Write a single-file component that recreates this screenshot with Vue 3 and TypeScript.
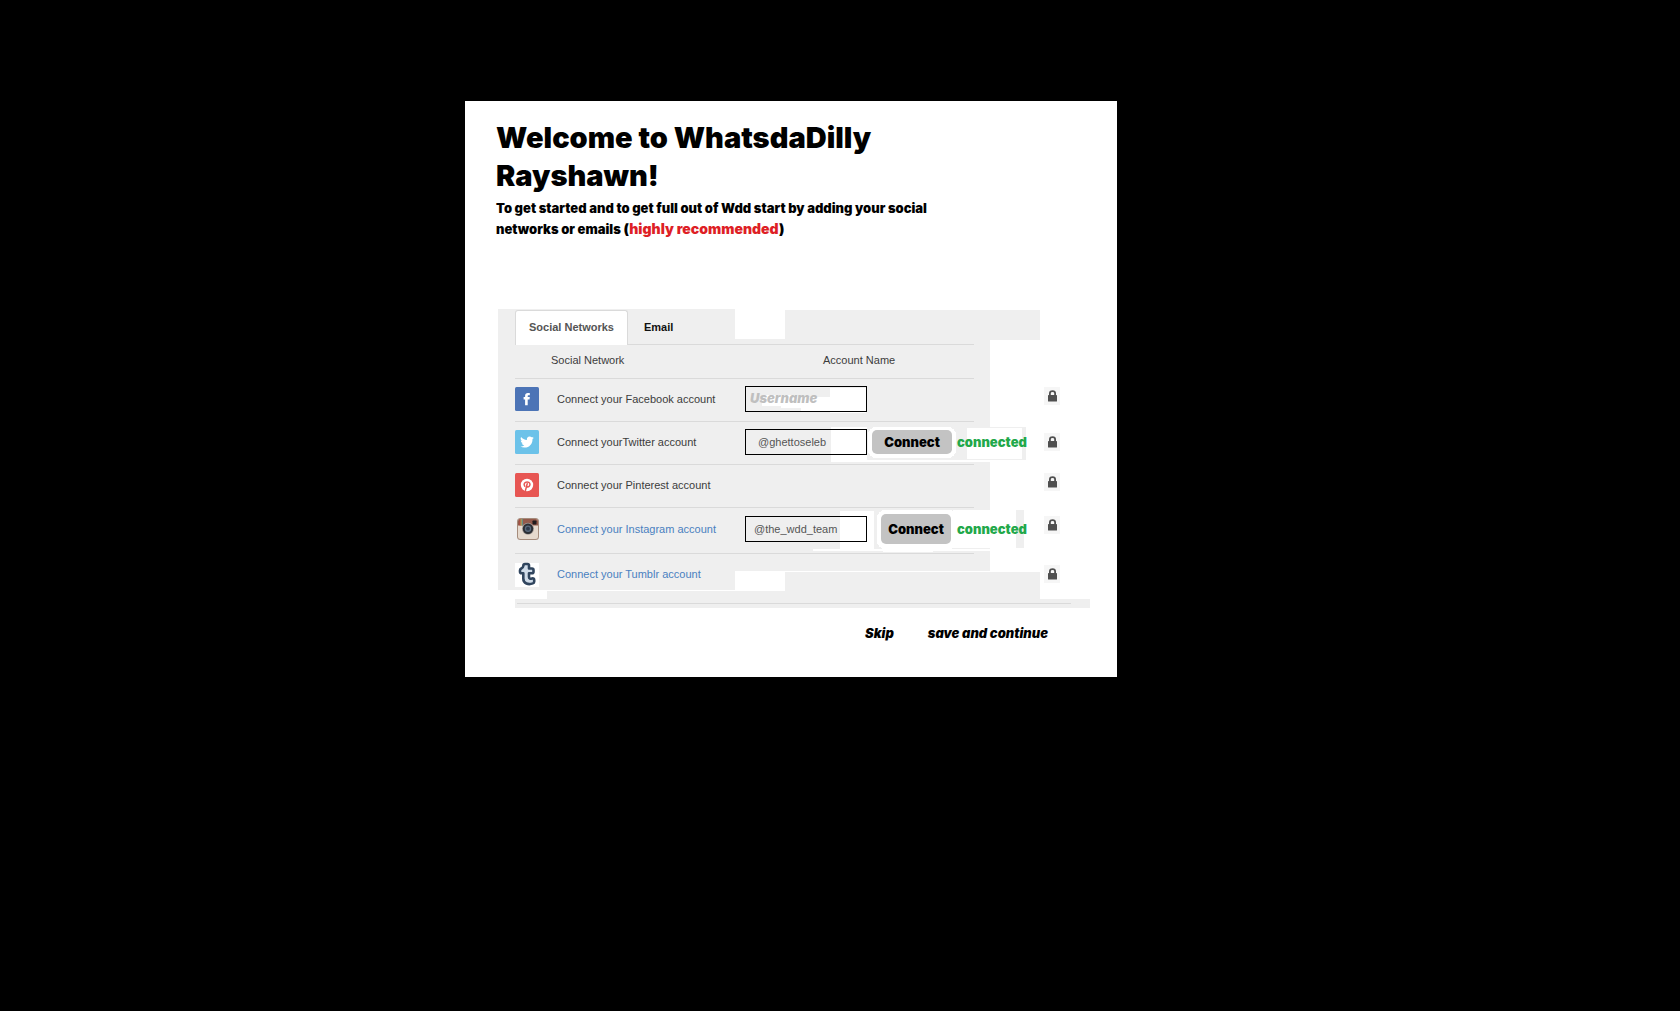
<script setup lang="ts">
import { ref } from 'vue'

type Network = 'facebook' | 'twitter' | 'pinterest' | 'instagram' | 'tumblr'

interface Account {
  id: Network
  label: string
  linked?: boolean
  editable?: boolean
  name: string
  connected?: boolean
}

const tab = ref<'social' | 'email'>('social')

const accounts = ref<Account[]>([
  { id: 'facebook', label: 'Connect your Facebook account', editable: true, name: '' },
  { id: 'twitter', label: 'Connect yourTwitter account', editable: true, name: '@ghettoseleb', connected: true },
  { id: 'pinterest', label: 'Connect your Pinterest account', name: '' },
  { id: 'instagram', label: 'Connect your Instagram account', linked: true, editable: true, name: '@the_wdd_team', connected: true },
  { id: 'tumblr', label: 'Connect your Tumblr account', linked: true, name: '' },
])
</script>

<template>
  <div class="page">
    <main class="card">
      <header class="intro">
        <h1>Welcome to WhatsdaDilly Rayshawn!</h1>
        <p>
          To get started and to get full out of Wdd start by adding your social<br />
          networks or emails
          <span class="note">(<em>highly recommended</em>)</span>
        </p>
      </header>

      <section class="panel">
        <svg class="backdrop" width="592" height="299" viewBox="0 0 592 299" shape-rendering="crispEdges" aria-hidden="true">
          <g fill="#efefef">
            <path d="M0 0H237V30H287V1H542V31H492V262H237V281H0Z" />
            <path d="M49 282H237V282H287V263H542V290H592V299H17V290H49Z" />
          </g>
          <g fill="#dadada">
            <path d="M17 35H476V36H17ZM17 69H476V70H17ZM17 112H476V113H17ZM17 155H476V156H17ZM17 198H476V199H17ZM17 244H476V245H17ZM19 294H573V295H19Z" />
          </g>
          <g fill="#fff">
            <path d="M332 79H368V104H332V102H303V99H283V97H264V86H300V88H332Z" />
            <path d="M333 118H369V152H333Z" />
            <path d="M333 151H492V153H333Z" />
            <path d="M342 202H376V240H342Z" />
            <path d="M315 240H492V242H435V243H385V242H315Z" />
          </g>
          <path fill="#efefef" d="M369 118H528V151H369Z" />
          <path fill="#fff" d="M469 119H524V150H469Z" />
          <rect x="370" y="118" width="88" height="31" rx="8" fill="#fff" />
          <path fill="#efefef" d="M376 201H526V239H376Z" />
          <path fill="#fff" d="M455 201H518V239H455Z" />
          <rect x="379" y="201" width="80" height="39" rx="8" fill="#fff" />
          <rect x="17" y="254" width="24" height="24" fill="#fff" />
        </svg>

        <div class="content">
          <nav class="tabs">
            <button type="button" :class="{ active: tab === 'social' }" @click="tab = 'social'">Social Networks</button>
            <button type="button" :class="{ active: tab === 'email' }" @click="tab = 'email'">Email</button>
          </nav>

          <table>
            <colgroup>
              <col class="c-icon" /><col class="c-label" /><col class="c-account" />
              <col class="c-action" /><col class="c-status" /><col class="c-lock" />
            </colgroup>
            <thead>
              <tr>
                <th colspan="2" class="h-network">Social Network</th>
                <th colspan="2" class="h-account">Account Name</th>
                <td></td>
                <td></td>
              </tr>
            </thead>
            <tbody>
              <tr v-for="a in accounts" :key="a.id" :class="a.id">
                <td>
                  <svg v-if="a.id === 'facebook'" class="icon" viewBox="0 0 24 24">
                    <rect width="24" height="24" rx="1.5" fill="#4c74b6" />
                    <path fill="#fff" d="M10.1 18.2V12.4H8.6V10h1.5V8.600C10.100 6.800 11.100 5.900 12.800 5.900H14.800V8.200H13.600C12.900 8.200 12.700 8.500 12.700 9.100V10H14.800L14.500 12.400H12.700V18.200Z" />
                  </svg>
                  <svg v-else-if="a.id === 'twitter'" class="icon" viewBox="0 0 24 24">
                    <rect width="24" height="24" rx="1.5" fill="#6cc2e9" />
                    <path fill="#fff" transform="translate(5.200 5.200) scale(.57)" d="M23.950 4.570a10 10 0 0 1-2.820.770 4.950 4.950 0 0 0 2.160-2.720c-.950.550-2 .950-3.130 1.180a4.920 4.920 0 0 0-8.380 4.480C7.690 8.100 4.070 6.130 1.640 3.160a4.900 4.900 0 0 0 1.520 6.570 4.900 4.900 0 0 1-2.230-.610v.060a4.920 4.920 0 0 0 3.950 4.830 5 5 0 0 1-2.210.080 4.940 4.940 0 0 0 4.600 3.420A9.870 9.870 0 0 1 0 19.540a13.990 13.990 0 0 0 7.550 2.210c9.050 0 14-7.500 14-13.980 0-.210 0-.420-.020-.630a9.940 9.940 0 0 0 2.420-2.570z" />
                  </svg>
                  <svg v-else-if="a.id === 'pinterest'" class="icon" viewBox="0 0 24 24">
                    <rect width="24" height="24" rx="1.5" fill="#e75653" />
                    <circle cx="12" cy="12" r="6.200" fill="#fff" />
                    <path fill="none" stroke="#e75653" stroke-width="1.500" stroke-linecap="round" d="M9.700 13.100C8.400 11.200 9.400 8.900 12.100 8.900C14.900 8.900 15.500 11.200 14.500 12.900C13.700 14.300 12 14.100 11.700 13M12.200 10.800L10.500 17.400" />
                  </svg>
                  <svg v-else-if="a.id === 'instagram'" class="icon" viewBox="0 0 24 24">
                    <rect x="2" y="1" width="22" height="22" rx="3.500" fill="#a58c7c" />
                    <rect x="3" y="2" width="20" height="20" rx="2.500" fill="#e6dace" />
                    <path fill="#935a4b" d="M3 8.500V4.500A2.500 2.500 0 0 1 5.500 2H20.500A2.500 2.500 0 0 1 23 4.500V8.500Z" />
                    <path fill="#b8473c" d="M4.500 2.300H5.600V8.500H4.500Z" />
                    <path fill="#b9ad59" d="M5.600 2.100H6.800V8.500H5.600Z" />
                    <path fill="#668b82" d="M6.800 2H8V8.500H6.800Z" />
                    <rect x="17.500" y="3.500" width="4" height="4" rx=".7" fill="#201b1d" />
                    <circle cx="13" cy="11.700" r="6" fill="#a39a94" />
                    <circle cx="13" cy="11.700" r="5.200" fill="#2b2e34" />
                    <circle cx="13" cy="11.700" r="3.200" fill="#5b6b7d" />
                    <circle cx="13" cy="11.700" r="1.900" fill="#303b4b" />
                  </svg>
                  <svg v-else class="icon" viewBox="0 0 24 24">
                    <path fill="#cfdbe8" stroke="#30455e" stroke-width="2.600" stroke-linejoin="round" d="M8.300 4C8.300 2.600 9 2 10 2H12.500C13.400 2 14 2.600 14 3.500V6.500H17C18 6.500 18.500 7 18.500 8V9.700C18.500 10.700 18 11.200 17 11.200H14V15C14 16.800 15.300 16.900 17 16.500C18.500 16.200 19.200 16.700 19.200 18V19.500C19.200 20.500 18.800 21 17.800 21.400C13.500 23 8.300 21.700 8.300 16.500V11.200H6.500C5.500 11.200 5 10.700 5 9.700V8.200C5 7.200 5.500 6.900 6.300 6.500C7.500 6 8.200 5.300 8.300 4Z" />
                  </svg>
                </td>
                <td>
                  <a v-if="a.linked" href="#" class="label linked">{{ a.label }}</a>
                  <label v-else :for="a.editable ? a.id : undefined" class="label">{{ a.label }}</label>
                </td>
                <td>
                  <input v-if="a.editable" :id="a.id" v-model="a.name" type="text" placeholder="Username" :aria-label="a.label" />
                </td>
                <td class="action">
                  <button v-if="a.connected" type="button" class="connect">Connect</button>
                </td>
                <td><span v-if="a.connected" class="status">connected</span></td>
                <td class="privacy">
                  <svg class="lock" width="16" height="18" viewBox="0 0 16 18" aria-label="Private">
                    <rect width="16" height="18" fill="#f6f6f6" />
                    <path fill="none" stroke="#4f4f4f" stroke-width="1.800" d="M5.900 9V6.200C5.900 3.300 11.100 3.300 11.100 6.200V9" />
                    <rect x="4" y="8" width="9" height="6.500" rx=".6" fill="#4f4f4f" />
                  </svg>
                </td>
              </tr>
            </tbody>
          </table>
        </div>
      </section>

      <footer class="actions">
        <button type="button">Skip</button>
        <button type="button">save and continue</button>
      </footer>
    </main>
  </div>
</template>

<style>
body {
  background: #000;
}
</style>

<style scoped>
.page {
  display: grid;
  grid-template-columns: 465fr minmax(auto, 652px) 563fr;
  padding: 101px 0;
  font-family: "Liberation Sans", Arial, sans-serif;
  font-size: 11px;
  color: #3c3c3c;
}
.card {
  grid-column: 2;
  box-sizing: border-box;
  padding: 18px 27px 34px 31px;
  background: #fff;
}
button {
  padding: 0;
  border: 0;
  background: none;
  cursor: pointer;
}
h1,
.intro p,
.connect,
.status,
.actions button,
input::placeholder {
  font-family: Inter, "Arial Black", sans-serif;
  font-weight: 900;
}
h1,
.intro p {
  max-width: 450px;
  margin: 0;
  color: #000;
}
h1 {
  font-size: 29px;
  line-height: 38px;
}
.intro p {
  margin-top: 3px;
  font-size: 13px;
  line-height: 21px;
}
.note {
  font-size: 14px;
  line-height: 14px;
}
.note em {
  font-style: normal;
  color: #de1f26;
}
.panel {
  display: grid;
  margin: 69px 0 0 2px;
}
.backdrop,
.content {
  grid-area: 1 / 1;
}
.content {
  padding-left: 17px;
}
.tabs {
  display: flex;
  height: 33px;
  padding-top: 1px;
}
.tabs button {
  box-sizing: border-box;
  height: 35px;
  padding: 0 15px 1px;
  border: 1px solid transparent;
  border-bottom: 0;
  font: bold 11px/31px "Liberation Sans", Arial, sans-serif;
  color: #111;
}
.tabs .active {
  width: 113px;
  padding: 0 0 1px;
  border-color: #dadada;
  border-radius: 3px 3px 0 0;
  background: #fff;
  color: #555;
}
table {
  width: 575px;
  border-collapse: collapse;
  table-layout: fixed;
}
th,
td {
  padding: 0;
  text-align: left;
  font-weight: normal;
}
.c-icon { width: 42px; }
.c-label { width: 188px; }
.c-account { width: 127px; }
.c-action { width: 85px; }
.c-status { width: 84px; }
.c-lock { width: 49px; }
thead tr {
  height: 34px;
}
.h-network {
  padding-left: 36px;
}
.h-account {
  padding-left: 78px;
}
tbody tr {
  height: 43px;
}
.instagram,
.tumblr {
  height: 45px;
}
.icon {
  display: block;
  width: 24px;
  height: 24px;
}
.label {
  color: #3c3c3c;
}
.linked {
  color: #4a7fc0;
  text-decoration: none;
}
input {
  display: block;
  box-sizing: border-box;
  width: 122px;
  height: 26px;
  padding: 0 4px;
  border: 1px solid #000;
  border-radius: 0;
  background: none;
  font: 11px "Liberation Sans", Arial, sans-serif;
  color: #555;
}
.twitter input {
  padding-left: 12px;
}
.instagram input {
  padding-left: 8px;
}
input::placeholder {
  font-size: 13px;
  font-style: italic;
  color: #bfbfbf;
  opacity: 1;
}
.connect {
  display: block;
  width: 80px;
  height: 24px;
  border-radius: 5px;
  background: #c3c3c3;
  font-size: 13px;
  color: #000;
}
.instagram .action {
  padding-left: 9px;
}
.instagram .connect {
  width: 70px;
  height: 30px;
}
.status {
  font-size: 13px;
  color: #22a84a;
}
.privacy {
  padding-left: 3px;
}
.facebook .privacy,
.pinterest .privacy,
.instagram .privacy {
  padding-top: 10px;
  vertical-align: top;
}
.lock {
  display: block;
}
.actions {
  display: flex;
  justify-content: flex-end;
  gap: 34px;
  padding: 15px 42px 0 0;
}
.actions button {
  font-size: 13px;
  line-height: 20px;
  font-style: italic;
  color: #000;
}
</style>
